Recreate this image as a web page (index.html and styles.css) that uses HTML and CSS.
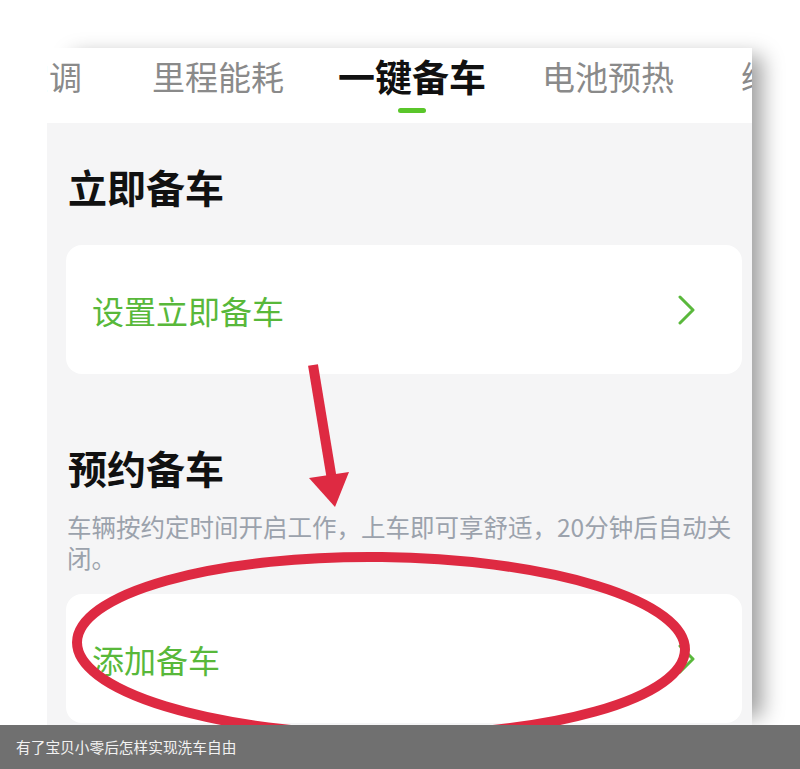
FILE: index.html
```html
<!DOCTYPE html>
<html lang="zh-CN">
<head>
    <meta charset="UTF-8">
    <meta name="viewport" content="width=device-width, initial-scale=1.0">
    <title>一键备车</title>
    <link rel="stylesheet" href="styles.css">
</head>
<body>
    <div class="stage">
        <div class="phone">
            <div class="tabs">
                <div class="tab tab-first">空调</div>
                <div class="tab">里程能耗</div>
                <div class="tab active">一键备车<span class="indicator"></span></div>
                <div class="tab">电池预热</div>
                <div class="tab tab-last">续航</div>
            </div>
            <div class="content">
                <h2 class="section-title">立即备车</h2>
                <div class="card">
                    <span class="card-label">设置立即备车</span>
                    <svg class="chevron" width="17" height="30" viewBox="0 0 17 30">
                        <polyline points="2,2 15,15 2,28" fill="none" stroke="#5ab83c" stroke-width="3" stroke-linecap="round" stroke-linejoin="round"/>
                    </svg>
                </div>
                <h2 class="section-title second">预约备车</h2>
                <p class="desc">车辆按约定时间开启工作，上车即可享舒适，20分钟后自动关闭。</p>
                <div class="card card-add">
                    <span class="card-label">添加备车</span>
                    <svg class="chevron" width="17" height="30" viewBox="0 0 17 30">
                        <polyline points="2,2 15,15 2,28" fill="none" stroke="#5ab83c" stroke-width="3" stroke-linecap="round" stroke-linejoin="round"/>
                    </svg>
                </div>
            </div>
        </div>

        <!-- red markup drawn over the screenshot -->
        <svg class="marks" width="800" height="725" viewBox="0 0 800 725">
            <line x1="313" y1="365" x2="332" y2="480" stroke="#de2a42" stroke-width="10"/>
            <polygon points="309,478 349,472 335,507" fill="#de2a42"/>
            <ellipse cx="381" cy="646" rx="304" ry="89" transform="rotate(0.7 381 646)" fill="none" stroke="#de2a42" stroke-width="10"/>
        </svg>
    </div>
    <div class="caption">有了宝贝小零后怎样实现洗车自由</div>
</body>
</html>
```

FILE: styles.css
```css
body {
    margin: 0;
    font-family: "Noto Sans CJK SC", "Noto Sans", sans-serif;
    background-color: #fff;
    width: 800px;
    height: 769px;
    overflow: hidden;
}
.stage {
    position: relative;
    height: 725px;
    padding-top: 48px;
    box-sizing: border-box;
    overflow: hidden;
}
.phone {
    margin-left: 47px;
    width: 705px;
    height: 677px;
    background-color: #f5f5f6;
    box-shadow: 18px 0 20px -8px rgba(0, 0, 0, 0.38);
    overflow: hidden;
}
.tabs {
    display: flex;
    align-items: flex-start;
    height: 75px;
    padding-top: 8px;
    box-sizing: border-box;
    margin-left: -31px;
    background-color: #fff;
    white-space: nowrap;
}
.tab {
    display: flex;
    flex-direction: column;
    align-items: center;
    font-size: 33px;
    line-height: 40px;
    color: #8a8a8a;
    margin-right: 54px;
    flex-shrink: 0;
}
.tab-first {
    margin-right: 70px;
}
.tab.active {
    font-size: 37px;
    font-weight: 700;
    color: #111;
    margin-right: 56px;
}
.tab-last {
    margin-left: 13px;
}
.indicator {
    width: 28px;
    height: 5px;
    margin-top: 12px;
    border-radius: 3px;
    background-color: #5ac62a;
}
.content {
    padding: 40px 10px 0 19px;
}
.section-title {
    margin: 0 0 36px 2px;
    font-size: 39px;
    line-height: 46px;
    font-weight: 700;
    color: #111;
}
.section-title.second {
    margin-top: 70px;
    margin-bottom: 21px;
}
.card {
    display: flex;
    align-items: center;
    justify-content: space-between;
    height: 129px;
    padding: 0 47px 0 26px;
    background-color: #fff;
    border-radius: 16px;
}
.card-label {
    font-size: 32px;
    color: #58b83a;
}
.desc {
    margin: 0 0 21px 1px;
    font-size: 24.5px;
    line-height: 31px;
    color: #9ba2ac;
}
.marks {
    position: absolute;
    left: 0;
    top: 0;
    pointer-events: none;
}
.caption {
    height: 44px;
    padding-left: 16px;
    background-color: #707070;
    color: #f2f2f2;
    font-size: 14.7px;
    line-height: 44px;
}
```
